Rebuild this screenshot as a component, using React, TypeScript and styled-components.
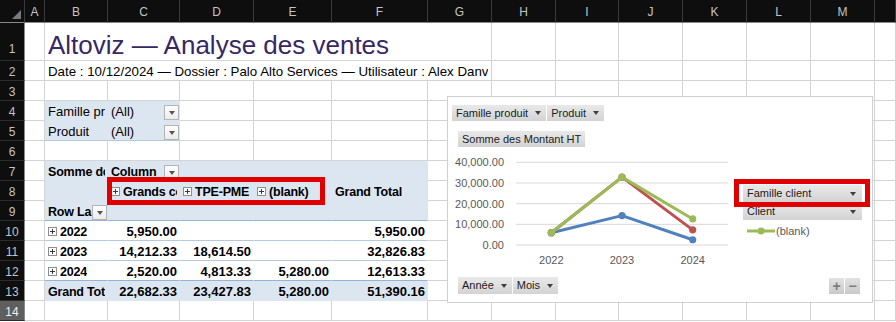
import React from 'react';
import styled, { createGlobalStyle } from 'styled-components';

const GlobalStyle = createGlobalStyle`
  html, body { margin: 0; padding: 0; background: #ffffff; }
  body { font-family: "Liberation Sans", Arial, sans-serif; overflow: hidden; }
  * { box-sizing: border-box; }
`;

const GRID = '#d4d4d4';
const PIVOT_FILL = '#dce6f1';
const LINE_STRONG = '#95b3d7';
const LINE_SOFT = '#b3c8e3';
const HEAD_BG = '#0e0e0e';

const COL_WIDTHS = [25, 20, 63, 72, 74, 78, 96, 64, 64, 63, 64, 64, 64, 64, 21];
const COLS = ['A', 'B', 'C', 'D', 'E', 'F', 'G', 'H', 'I', 'J', 'K', 'L', 'M', 'N'];
const ROWS = Array.from({ length: 14 }, (_, i) => i + 1);

type Fill = 'none' | 'pivot' | 'white';
type Line = 'strong' | 'soft';
interface Spec {
  text?: string;
  span?: number;
  title?: boolean;
  sub?: boolean;
  fill?: Fill;
  line?: Line;
  right?: boolean;
  bold?: boolean;
  drop?: boolean;
  expand?: boolean;
}

const SPECS: Record<string, Spec> = {
  B1: { span: 6, title: true, text: 'Altoviz — Analyse des ventes' },
  B2: { span: 6, sub: true, text: 'Date : 10/12/2024 — Dossier : Palo Alto Services — Utilisateur : Alex Danv' },
  B4: { fill: 'pivot', text: 'Famille pr' },
  C4: { fill: 'pivot', text: '(All)', drop: true },
  B5: { fill: 'pivot', line: 'soft', text: 'Produit' },
  C5: { fill: 'pivot', line: 'soft', text: '(All)', drop: true },
  B7: { fill: 'pivot', bold: true, text: 'Somme de' },
  C7: { fill: 'pivot', bold: true, text: 'Column', drop: true },
  D7: { fill: 'pivot' },
  E7: { fill: 'pivot' },
  F7: { fill: 'pivot' },
  B8: { fill: 'pivot' },
  C8: { fill: 'pivot', bold: true, expand: true, text: 'Grands co' },
  D8: { fill: 'pivot', bold: true, expand: true, text: 'TPE-PME' },
  E8: { fill: 'pivot', bold: true, expand: true, text: '(blank)' },
  F8: { fill: 'pivot', bold: true, text: 'Grand Total' },
  B9: { fill: 'pivot', line: 'strong', bold: true, text: 'Row La', drop: true },
  C9: { fill: 'pivot', line: 'strong' },
  D9: { fill: 'pivot', line: 'strong' },
  E9: { fill: 'pivot', line: 'strong' },
  F9: { fill: 'pivot', line: 'strong' },
};

const DATA: { row: number; line: Line; values: string[] }[] = [
  { row: 10, line: 'soft', values: ['2022', '5,950.00', '', '', '5,950.00'] },
  { row: 11, line: 'soft', values: ['2023', '14,212.33', '18,614.50', '', '32,826.83'] },
  { row: 12, line: 'strong', values: ['2024', '2,520.00', '4,813.33', '5,280.00', '12,613.33'] },
];
DATA.forEach(({ row, line, values }) => {
  values.forEach((v, i) => {
    SPECS[COLS[i + 1] + row] = {
      fill: 'white',
      line,
      bold: true,
      text: v,
      right: i > 0,
      expand: i === 0,
    };
  });
});
['Grand Tot', '22,682.33', '23,427.83', '5,280.00', '51,390.16'].forEach((v, i) => {
  SPECS[COLS[i + 1] + 13] = { fill: 'pivot', bold: true, text: v, right: i > 0 };
});

/* ---------- sheet ---------- */

const Sheet = styled.div`
  position: relative;
  width: 896px;
  height: 322px;
  overflow: hidden;
  display: grid;
  grid-template-columns: ${COL_WIDTHS.map((w) => `${w}px`).join(' ')};
  grid-template-rows: 23px 38px repeat(13, 20px);
  font-family: "Liberation Sans", Arial, sans-serif;
  font-size: 13px;
  color: #000;
`;

const Corner = styled.div`
  background: ${HEAD_BG};
  border-right: 1px solid #3a3a3a;
  border-bottom: 1px solid #8a8a8a;
  display: flex;
  justify-content: flex-end;
  align-items: flex-end;
  padding: 0 3px 3px 0;
`;

const ColHead = styled.div`
  background: ${HEAD_BG};
  color: #c4c4c4;
  font-size: 12px;
  border-right: 1px solid #3a3a3a;
  border-bottom: 1px solid #8a8a8a;
  display: flex;
  align-items: center;
  justify-content: center;
  padding-top: 1px;
`;

const RowHead = styled.div<{ $active?: boolean; $tall?: boolean }>`
  background: ${(p) => (p.$active ? '#5f5f5f' : HEAD_BG)};
  color: ${(p) => (p.$active ? '#f0f0f0' : '#c4c4c4')};
  font-size: 12px;
  line-height: 14px;
  border-right: 1px solid #8a8a8a;
  border-bottom: 1px solid #2c2c2c;
  display: flex;
  align-items: flex-end;
  justify-content: center;
  padding-bottom: ${(p) => (p.$tall ? '4px' : '1px')};
`;

const fillColor = (f: Fill) => (f === 'pivot' ? PIVOT_FILL : '#ffffff');
const edgeColor = (f: Fill) => (f === 'none' ? GRID : fillColor(f));

const Cell = styled.div<{
  $fill: Fill;
  $line?: Line;
  $right?: boolean;
  $bold?: boolean;
  $span: number;
  $drop?: boolean;
}>`
  grid-column: span ${(p) => p.$span};
  display: flex;
  align-items: flex-end;
  justify-content: ${(p) => (p.$right ? 'flex-end' : 'flex-start')};
  min-width: 0;
  overflow: hidden;
  padding: 0 ${(p) => (p.$drop ? '0' : '2px')} 0 3px;
  background: ${(p) => fillColor(p.$fill)};
  border-right: 1px solid ${(p) => edgeColor(p.$fill)};
  border-bottom: 1px solid
    ${(p) =>
      p.$line === 'strong' ? LINE_STRONG : p.$line === 'soft' ? LINE_SOFT : edgeColor(p.$fill)};
  font-weight: ${(p) => (p.$bold ? 700 : 400)};
  font-size: ${(p) => (p.$bold && !p.$right ? '12.5px' : '13px')};
  letter-spacing: ${(p) => (p.$bold && !p.$right ? '-0.2px' : '0')};
  white-space: nowrap;
  line-height: 16px;
`;

const CellText = styled.span<{ $grow?: boolean }>`
  flex: ${(p) => (p.$grow ? '1 1 auto' : '0 1 auto')};
  min-width: 0;
  overflow: hidden;
`;

const TitleText = styled.span`
  font-size: 26px;
  line-height: 30px;
  color: #362766;
  overflow: hidden;
`;

const SubText = styled.span`
  font-size: 13.3px;
  line-height: 16px;
  overflow: hidden;
`;

const DropButton = styled.span`
  flex: none;
  width: 15px;
  height: 15px;
  border: 1px solid #b4b4b4;
  background: linear-gradient(#fdfdfd, #ececec);
  display: flex;
  align-items: center;
  justify-content: center;
  &::after {
    content: '';
    width: 0;
    height: 0;
    border-left: 3.5px solid transparent;
    border-right: 3.5px solid transparent;
    border-top: 4px solid #555555;
  }
`;

const ExpandIcon = styled.svg`
  flex: none;
  width: 9px;
  height: 9px;
  margin: 0 3px 4px 0;
`;

const PivotHighlight = styled.div`
  position: absolute;
  left: 107px;
  top: 177px;
  width: 218px;
  height: 28px;
  border: 5px solid #e00000;
  pointer-events: none;
`;

function Expand() {
  return (
    <ExpandIcon viewBox="0 0 9 9">
      <rect x="0.5" y="0.5" width="8" height="8" fill="#ffffff" stroke="#8e8e8e" />
      <path d="M2 4.5 H7 M4.5 2 V7" stroke="#3a3a3a" strokeWidth="1" />
    </ExpandIcon>
  );
}

function SheetCell({ spec }: { spec: Spec }) {
  const fill = spec.fill ?? 'none';
  let body: React.ReactNode = null;
  if (spec.title) body = <TitleText>{spec.text}</TitleText>;
  else if (spec.sub) body = <SubText>{spec.text}</SubText>;
  else if (spec.text) body = <CellText $grow={spec.drop}>{spec.text}</CellText>;
  return (
    <Cell
      $fill={fill}
      $line={spec.line}
      $right={spec.right}
      $bold={spec.bold}
      $span={spec.span ?? 1}
      $drop={spec.drop}
    >
      {spec.expand && <Expand />}
      {body}
      {spec.drop && <DropButton />}
    </Cell>
  );
}

function renderRow(r: number) {
  const out: React.ReactNode[] = [];
  for (let i = 0; i < COLS.length; ) {
    const key = COLS[i] + r;
    const spec = SPECS[key] ?? {};
    out.push(<SheetCell key={key} spec={spec} />);
    i += spec.span ?? 1;
  }
  return out;
}

/* ---------- chart ---------- */

const ChartPanel = styled.div`
  position: absolute;
  left: 447px;
  top: 96px;
  width: 426px;
  height: 207px;
  border: 1px solid #d0d0d0;
  background: #ffffff;
  display: flex;
  flex-direction: column;
  align-items: flex-start;
  padding: 8px 0 0 4px;
  font-family: "Liberation Sans", Arial, sans-serif;
  font-size: 11px;
`;

const FieldRow = styled.div`
  display: flex;
  gap: 1px;
`;

const FieldButton = styled.div`
  display: flex;
  align-items: center;
  justify-content: space-between;
  gap: 7px;
  height: 16px;
  padding: 0 5px 0 4px;
  background: linear-gradient(#e9e9e9, #d3d3d3);
  color: #1c1c1c;
  white-space: nowrap;
  line-height: 16px;
`;

const ValueButton = styled(FieldButton)`
  margin: 10px 0 0 6px;
  padding: 0 4px;
`;

const Caret = styled.span`
  flex: none;
  width: 0;
  height: 0;
  border-left: 3.5px solid transparent;
  border-right: 3.5px solid transparent;
  border-top: 4px solid #404040;
`;

const PlotRow = styled.div`
  display: flex;
  align-items: flex-start;
  height: 120px;
`;

const PlotSvg = styled.svg`
  flex: none;
  width: 282px;
  height: 120px;
`;

const Legend = styled.div`
  position: relative;
  margin: 38px 0 0 9px;
  width: 119px;
  display: flex;
  flex-direction: column;
  gap: 1px;
`;

const LegendButton = styled(FieldButton)`
  height: 17px;
  line-height: 17px;
  padding: 0 6px 0 4px;
`;

const LegendHighlight = styled.div`
  position: absolute;
  left: -9px;
  top: -6px;
  width: 136px;
  height: 28px;
  border: 5px solid #e00000;
  pointer-events: none;
`;

const LegendItem = styled.div`
  display: flex;
  align-items: center;
  gap: 1px;
  height: 14px;
  margin-top: 3px;
  padding-left: 4px;
  color: #595959;
`;

const Swatch = styled.svg`
  flex: none;
  width: 28px;
  height: 8px;
`;

const BottomRow = styled.div`
  align-self: stretch;
  margin-top: 10px;
  padding: 0 12px 0 6px;
  display: flex;
  justify-content: space-between;
  align-items: center;
`;

const ButtonGroup = styled.div`
  display: flex;
  gap: 1px;
`;

const AxisButton = styled(FieldButton)`
  height: 17px;
  line-height: 17px;
`;

const ZoomButton = styled.div`
  width: 15px;
  height: 16px;
  background: linear-gradient(#e2e2e2, #c9c9c9);
  color: #7d7d7d;
  font-size: 14px;
  font-weight: 700;
  display: flex;
  align-items: center;
  justify-content: center;
  line-height: 16px;
`;

const SCALE = 82.7 / 40000;
const yOf = (v: number) => 98 - v * SCALE;
const XS = [99.3, 170, 240.7];
const YEARS = ['2022', '2023', '2024'];
const TICKS = [40000, 30000, 20000, 10000, 0];
const SERIES = [
  { color: '#4f81bd', values: [5950, 14212.33, 2520] },
  { color: '#c0504d', values: [5950, 32826.83, 7333.33] },
  { color: '#9bbb59', values: [5950, 32826.83, 12613.33] },
];
const fmt = (v: number) =>
  v.toLocaleString('en-US', { minimumFractionDigits: 2, maximumFractionDigits: 2 });

function Plot() {
  return (
    <PlotSvg viewBox="0 0 282 120">
      {TICKS.map((t) => (
        <g key={t}>
          <line x1="64" x2="276" y1={yOf(t)} y2={yOf(t)} stroke="#d9d9d9" strokeWidth="1" />
          <text
            x="52"
            y={yOf(t) + 4}
            textAnchor="end"
            fontSize="11"
            fontFamily="Liberation Sans, Arial, sans-serif"
            fill="#595959"
          >
            {fmt(t)}
          </text>
        </g>
      ))}
      {YEARS.map((y, i) => (
        <text
          key={y}
          x={XS[i]}
          y="117"
          textAnchor="middle"
          fontSize="11"
          fontFamily="Liberation Sans, Arial, sans-serif"
          fill="#595959"
        >
          {y}
        </text>
      ))}
      {SERIES.map((s) => (
        <g key={s.color}>
          <polyline
            points={s.values.map((v, i) => `${XS[i]},${yOf(v)}`).join(' ')}
            fill="none"
            stroke={s.color}
            strokeWidth="3"
            strokeLinejoin="round"
            strokeLinecap="round"
          />
          {s.values.map((v, i) => (
            <circle key={i} cx={XS[i]} cy={yOf(v)} r="3.6" fill={s.color} />
          ))}
        </g>
      ))}
    </PlotSvg>
  );
}

function Chart() {
  return (
    <ChartPanel>
      <FieldRow>
        <FieldButton>
          Famille produit
          <Caret />
        </FieldButton>
        <FieldButton>
          Produit
          <Caret />
        </FieldButton>
      </FieldRow>
      <ValueButton>Somme des Montant HT</ValueButton>
      <PlotRow>
        <Plot />
        <Legend>
          <LegendButton>
            Famille client
            <Caret />
          </LegendButton>
          <LegendButton>
            Client
            <Caret />
          </LegendButton>
          <LegendItem>
            <Swatch viewBox="0 0 28 8">
              <line x1="0" x2="28" y1="4" y2="4" stroke="#9bbb59" strokeWidth="3" />
              <circle cx="14" cy="4" r="3.5" fill="#9bbb59" />
            </Swatch>
            (blank)
          </LegendItem>
          <LegendHighlight />
        </Legend>
      </PlotRow>
      <BottomRow>
        <ButtonGroup>
          <AxisButton>
            Année
            <Caret />
          </AxisButton>
          <AxisButton>
            Mois
            <Caret />
          </AxisButton>
        </ButtonGroup>
        <ButtonGroup>
          <ZoomButton>+</ZoomButton>
          <ZoomButton>−</ZoomButton>
        </ButtonGroup>
      </BottomRow>
    </ChartPanel>
  );
}

export default function App() {
  return (
    <>
      <GlobalStyle />
      <Sheet>
        <Corner>
          <svg width="9" height="9" viewBox="0 0 9 9">
            <path d="M9 0 L9 9 L0 9 Z" fill="#7b7b7b" />
          </svg>
        </Corner>
        {COLS.map((c) => (
          <ColHead key={c}>{c === 'N' ? '' : c}</ColHead>
        ))}
        {ROWS.map((r) => (
          <React.Fragment key={r}>
            <RowHead $active={r === 14} $tall={r === 1}>
              {r}
            </RowHead>
            {renderRow(r)}
          </React.Fragment>
        ))}
        <PivotHighlight />
        <Chart />
      </Sheet>
    </>
  );
}
